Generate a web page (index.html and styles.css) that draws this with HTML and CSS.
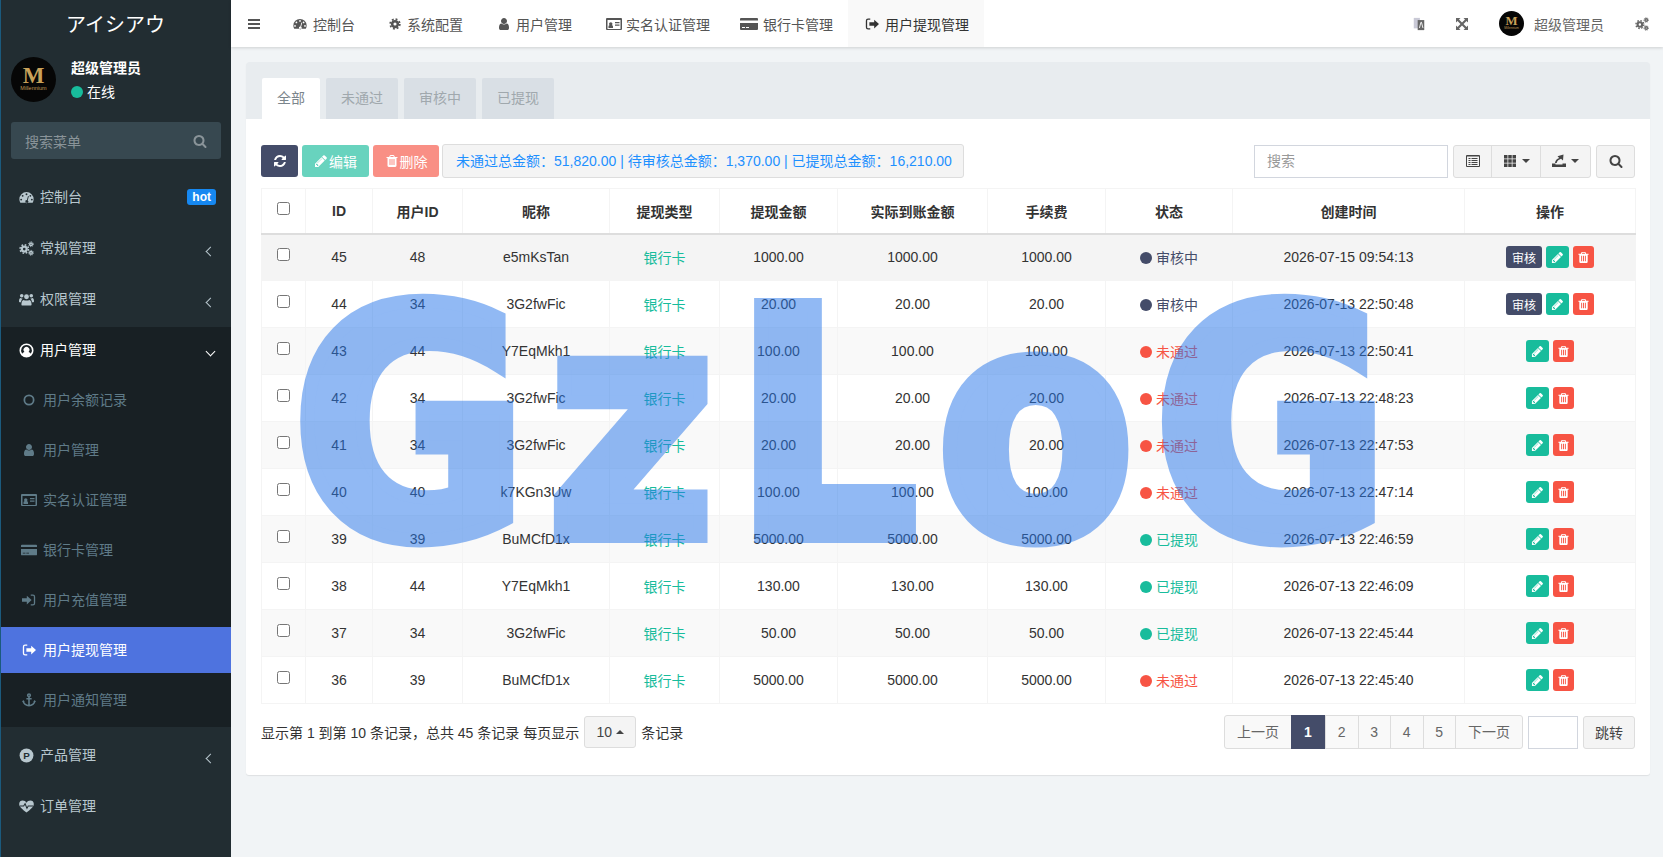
FILE: index.html
```html
<!DOCTYPE html>
<html lang="zh-CN">
<head>
    <meta charset="UTF-8">
    <title>用户提现管理</title>
    <link rel="stylesheet" href="styles.css">
</head>
<body>
    <svg class="sprite" xmlns="http://www.w3.org/2000/svg">
        <symbol id="i-logo" viewBox="0 0 45 45">
            <circle cx="22.5" cy="22.5" r="22.5" fill="#060606"/>
            <text x="22.5" y="26" text-anchor="middle" font-family="Liberation Serif" font-weight="700" font-size="23" fill="#c9a15a">M</text>
            <text x="22.5" y="33" text-anchor="middle" font-family="Liberation Sans" font-size="5.5" fill="#c09a55">Millennium</text>
        </symbol>
        <symbol id="i-dash" viewBox="0 0 16 16"><path fill-rule="evenodd" d="M8 2.2A7.6 7.6 0 0 0 .4 9.8c0 1.3.3 2.6 1 3.7h13.2c.7-1.1 1-2.4 1-3.7A7.6 7.6 0 0 0 8 2.2zM8 3.5a1 1 0 1 1 0 2 1 1 0 0 1 0-2zM3.9 5.2a1 1 0 1 1 0 2 1 1 0 0 1 0-2zM12.1 5.2a1 1 0 1 1 0 2 1 1 0 0 1 0-2zM2.3 9.2a1 1 0 1 1 0 2 1 1 0 0 1 0-2zM13.7 9.2a1 1 0 1 1 0 2 1 1 0 0 1 0-2zM9.6 6.4l.9.3-1.2 4.4a1.6 1.6 0 1 1-.9-.3z"/></symbol>
        <symbol id="i-cog" viewBox="0 0 16 16"><circle cx="8" cy="8" r="3.8" fill="none" stroke="currentColor" stroke-width="3.4"/><circle cx="8" cy="8" r="6.4" fill="none" stroke="currentColor" stroke-width="2.4" stroke-dasharray="2.5 2.53"/></symbol>
        <symbol id="i-cogs" viewBox="0 0 16 16">
            <circle cx="5.6" cy="8.6" r="2.6" fill="none" stroke="currentColor" stroke-width="2.4"/><circle cx="5.6" cy="8.6" r="4.5" fill="none" stroke="currentColor" stroke-width="1.6" stroke-dasharray="1.77 1.76"/>
            <circle cx="12.8" cy="3.4" r="1.4" fill="none" stroke="currentColor" stroke-width="1.6"/><circle cx="12.8" cy="3.4" r="2.6" fill="none" stroke="currentColor" stroke-width="1" stroke-dasharray="1.02 1.02"/>
            <circle cx="12.8" cy="12.6" r="1.4" fill="none" stroke="currentColor" stroke-width="1.6"/><circle cx="12.8" cy="12.6" r="2.6" fill="none" stroke="currentColor" stroke-width="1" stroke-dasharray="1.02 1.02"/>
        </symbol>
        <symbol id="i-users" viewBox="0 0 16 16"><circle cx="8" cy="5" r="2.6"/><circle cx="2.9" cy="3.9" r="1.9"/><circle cx="13.1" cy="3.9" r="1.9"/><path d="M3.6 14.4c-.7 0-1-.5-1-1.1 0-2.3.6-4.8 2.5-4.8 1 .8 4.8.8 5.8 0 1.9 0 2.5 2.5 2.5 4.8 0 .6-.4 1.1-1 1.1zM0 10c0-2 .5-3.6 1.9-3.6.5.5 1.3.7 2 .6-.6.5-1.4 1.5-1.8 3.8H.6c-.4 0-.6-.3-.6-.8zM16 10c0-2-.5-3.6-1.9-3.6-.5.5-1.3.7-2 .6.6.5 1.4 1.5 1.8 3.8h1.5c.4 0 .6-.3.6-.8z"/></symbol>
        <symbol id="i-ucircle" viewBox="0 0 16 16"><path fill-rule="evenodd" d="M8 .5a7.5 7.5 0 1 0 0 15 7.5 7.5 0 0 0 0-15zM8 2.2a5.8 5.8 0 0 1 4.6 9.3C12 10.2 10.8 9.6 10.2 9.5a3.1 3.1 0 1 0-4.4 0c-.6.1-1.8.7-2.4 2A5.8 5.8 0 0 1 8 2.2z"/></symbol>
        <symbol id="i-ring" viewBox="0 0 16 16"><circle cx="8" cy="8" r="5.3" fill="none" stroke="currentColor" stroke-width="2"/></symbol>
        <symbol id="i-user" viewBox="0 0 1792 1792"><path d="M1536 1399q0 109-62.5 187t-150.5 78h-854q-88 0-150.5-78t-62.5-187q0-85 8.5-160.5t31.5-152 58.5-131 94-89 134.5-34.5q131 128 313 128t313-128q76 0 134.5 34.5t94 89 58.5 131 31.5 152 8.5 160.5zm-256-887q0 159-112.5 271.5t-271.5 112.5-271.5-112.5-112.5-271.5 112.5-271.5 271.5-112.5 271.5 112.5 112.5 271.5z"/></symbol>
        <symbol id="i-idcard" viewBox="0 0 16 14"><path fill-rule="evenodd" d="M1 1h14a1 1 0 0 1 1 1v10a1 1 0 0 1-1 1H1a1 1 0 0 1-1-1V2a1 1 0 0 1 1-1zM1.5 3v9h13V3zM2.5 11V9.500c0-.8.6-1.200 1.200-1.200a1.700 1.700 0 1 1 2.100 0c.6 0 1.200.4 1.200 1.200V11zM9 5h4.500v1.200H9zM9 7.500h4.500v1.200H9z"/></symbol>
        <symbol id="i-card" viewBox="0 0 18 14"><path fill-rule="evenodd" d="M1 1h16a1 1 0 0 1 1 1v1.500H0V2a1 1 0 0 1 1-1zM0 6h18v6a1 1 0 0 1-1 1H1a1 1 0 0 1-1-1zM2 10v1h3v-1zM6 10v1h3v-1z"/></symbol>
        <symbol id="i-signin" viewBox="0 0 16 16"><path d="M0 6h5.500V3L11 8l-5.500 5v-3H0z"/><path d="M10 2.500h2.500c1 0 1.800.8 1.800 1.800v7.400c0 1-.8 1.800-1.800 1.800H10" fill="none" stroke="currentColor" stroke-width="1.500"/></symbol>
        <symbol id="i-signout" viewBox="0 0 16 16"><path d="M5 6h5.500V3L16 8l-5.500 5v-3H5z"/><path d="M6 2.500H3.500c-1 0-1.800.8-1.800 1.800v7.400c0 1 .8 1.800 1.800 1.800H6" fill="none" stroke="currentColor" stroke-width="1.500"/></symbol>
        <symbol id="i-anchor" viewBox="0 0 16 16"><g fill="none" stroke="currentColor" stroke-width="1.800"><circle cx="8" cy="2.600" r="1.500"/><path d="M8 4v10.500M5 6.500h6M1.500 9c0 3.500 3.500 5.500 6.500 5.500s6.500-2 6.500-5.500"/></g><path d="M0 10l1.500-2L3 10zM13 10l1.500-2 1.500 2z"/></symbol>
        <symbol id="i-ph" viewBox="0 0 16 16"><circle cx="8" cy="8" r="7.400"/><text x="8" y="11.600" text-anchor="middle" font-family="Liberation Sans" font-weight="700" font-size="10.500" fill="#222d32">P</text></symbol>
        <symbol id="i-heart" viewBox="0 0 16 16"><path d="M8 14.500C4 11 .2 8.500.2 5.200.2 3 1.900 1.700 3.900 1.700c1.800 0 3.200 1 4.100 2.200.9-1.200 2.300-2.200 4.100-2.200 2 0 3.700 1.300 3.700 3.500 0 3.300-3.800 5.800-7.800 9.300z"/><path d="M1 7.500h4L6.500 5l2 5 1.300-2.500H15" fill="none" stroke="#222d32" stroke-width="1.100"/></symbol>
        <symbol id="i-bars" viewBox="0 0 14 14"><path d="M1 2h12v2H1zM1 6h12v2H1zM1 10h12v2H1z"/></symbol>
        <symbol id="i-lang" viewBox="0 0 14 16"><path d="M1 1h7v12H1z" fill="#c9c9d6"/><path d="M5.500 3.500H13V15H5.500z" fill="#666"/><path d="M7.500 12.500l1.700-6.500h.6l1.700 6.500" fill="none" stroke="#fff" stroke-width="1"/></symbol>
        <symbol id="i-expand" viewBox="0 0 14 14"><path d="M1 1h4.500L4 2.500 7 5.500 10 2.500 8.500 1H13v4.500L11.500 4 8.500 7l3 3L13 8.500V13H8.500L10 11.500l-3-3-3 3L5.500 13H1V8.500L2.500 10l3-3-3-3L1 5.500z"/></symbol>
        <symbol id="i-refresh" viewBox="0 0 1792 1792"><path d="M1639 1056q0 5-1 7-64 268-268 434.5t-478 166.5q-146 0-282.5-55t-243.5-157l-129 129q-19 19-45 19t-45-19-19-45v-448q0-26 19-45t45-19h448q26 0 45 19t19 45-19 45l-137 137q71 66 161 102t187 36q134 0 250-65t186-179q11-17 53-117 8-23 30-23h192q13 0 22.5 9.5t9.5 22.5zm25-800v448q0 26-19 45t-45 19h-448q-26 0-45-19t-19-45 19-45l138-138q-148-137-349-137-134 0-250 65t-186 179q-11 17-53 117-8 23-30 23h-199q-13 0-22.5-9.5t-9.5-22.5v-7q65-268 270-434.5t480-166.5q146 0 284 55.5t245 156.5l130-129q19-19 45-19t45 19 19 45z"/></symbol>
        <symbol id="i-pencil" viewBox="0 0 1792 1792"><path d="M491 1536l91-91-235-235-91 91v107h128v128h107zm523-928q0-22-22-22-10 0-17 7l-542 542q-7 7-7 17 0 22 22 22 10 0 17-7l542-542q7-7 7-17zm-54-192l416 416-832 832h-416v-416zm683 96q0 53-37 90l-166 166-416-416 166-165q36-38 90-38 53 0 91 38l235 234q37 39 37 91z"/></symbol>
        <symbol id="i-trash" viewBox="0 0 1792 1792"><path d="M704 1376v-704q0-14-9-23t-23-9h-64q-14 0-23 9t-9 23v704q0 14 9 23t23 9h64q14 0 23-9t9-23zm256 0v-704q0-14-9-23t-23-9h-64q-14 0-23 9t-9 23v704q0 14 9 23t23 9h64q14 0 23-9t9-23zm256 0v-704q0-14-9-23t-23-9h-64q-14 0-23 9t-9 23v704q0 14 9 23t23 9h64q14 0 23-9t9-23zm-544-992h448l-48-117q-7-9-17-11h-317q-10 2-17 11zm928 32v64q0 14-9 23t-23 9h-96v948q0 83-47 143.5t-113 60.5h-832q-66 0-113-58.5t-47-141.5v-952h-96q-14 0-23-9t-9-23v-64q0-14 9-23t23-9h309l70-167q15-37 54-63t79-26h320q40 0 79 26t54 63l70 167h309q14 0 23 9t9 23z"/></symbol>
        <symbol id="i-search" viewBox="0 0 1792 1792"><path d="M1216 832q0-185-131.5-316.5t-316.5-131.5-316.5 131.5-131.5 316.5 131.5 316.5 316.5 131.5 316.5-131.5 131.5-316.5zm512 832q0 52-38 90t-90 38q-54 0-90-38l-343-342q-179 124-399 124-143 0-273.5-55.5t-225-150-150-225-55.5-273.5 55.5-273.5 150-225 225-150 273.5-55.5 273.5 55.5 225 150 150 225 55.5 273.5q0 220-124 399l343 343q37 37 37 90z"/></symbol>
        <symbol id="i-list" viewBox="0 0 14 14"><path fill-rule="evenodd" d="M1 1h12a1 1 0 0 1 1 1v10a1 1 0 0 1-1 1H1a1 1 0 0 1-1-1V2a1 1 0 0 1 1-1zM1 2.500V12h12V2.500zM2.500 4h2v1h-2zM5.500 4h6v1h-6zM2.500 6h2v1h-2zM5.500 6h6v1h-6zM2.500 8h2v1h-2zM5.500 8h6v1h-6zM2.500 10h2v1h-2zM5.500 10h6v1h-6z"/></symbol>
        <symbol id="i-th" viewBox="0 0 14 14"><path d="M1 1h3.500v3.500H1zM5.250 1h3.500v3.500h-3.500zM9.500 1H13v3.500H9.500zM1 5.250h3.500v3.500H1zM5.250 5.250h3.500v3.500h-3.500zM9.500 5.250H13v3.500H9.500zM1 9.500h3.500V13H1zM5.250 9.500h3.500V13h-3.500zM9.500 9.500H13V13H9.500z"/></symbol>
        <symbol id="i-export" viewBox="0 0 14 14"><path d="M0 9.500h3.500v1h7v-1H14V13H0zM3 9c.2-2.500 2-4.300 4.200-5L5.500 2.300 11.500.5 11 6.500 9 4.800C7 5.500 5 7 4.700 9z"/></symbol>
    </svg>

    <div class="layout">
        <aside class="sidebar">
            <div class="brand">アイシアウ</div>
            <div class="user-panel">
                <svg class="avatar"><use href="#i-logo"/></svg>
                <div class="user-info">
                    <div class="user-name">超级管理员</div>
                    <div class="user-state"><span class="dot dot-green"></span>在线</div>
                </div>
            </div>
            <div class="menu-search">
                <span>搜索菜单</span>
                <svg class="ico"><use href="#i-search"/></svg>
            </div>
            <ul class="menu">
                <li class="menu-item"><svg class="ico"><use href="#i-dash"/></svg><span>控制台</span><em class="badge">hot</em></li>
                <li class="menu-item"><svg class="ico"><use href="#i-cogs"/></svg><span>常规管理</span><i class="chev"></i></li>
                <li class="menu-item"><svg class="ico"><use href="#i-users"/></svg><span>权限管理</span><i class="chev"></i></li>
                <li class="menu-group">
                    <div class="menu-item open"><svg class="ico"><use href="#i-ucircle"/></svg><span>用户管理</span><i class="chev down"></i></div>
                    <ul class="submenu">
                        <li><svg class="ico"><use href="#i-ring"/></svg><span>用户余额记录</span></li>
                        <li><svg class="ico"><use href="#i-user"/></svg><span>用户管理</span></li>
                        <li><svg class="ico"><use href="#i-idcard"/></svg><span>实名认证管理</span></li>
                        <li><svg class="ico"><use href="#i-card"/></svg><span>银行卡管理</span></li>
                        <li><svg class="ico"><use href="#i-signin"/></svg><span>用户充值管理</span></li>
                        <li class="active"><svg class="ico"><use href="#i-signout"/></svg><span>用户提现管理</span></li>
                        <li><svg class="ico"><use href="#i-anchor"/></svg><span>用户通知管理</span></li>
                    </ul>
                </li>
                <li class="menu-item"><svg class="ico"><use href="#i-ph"/></svg><span>产品管理</span><i class="chev"></i></li>
                <li class="menu-item"><svg class="ico"><use href="#i-heart"/></svg><span>订单管理</span></li>
            </ul>
        </aside>

        <div class="main">
            <header class="navbar">
                <a class="nav-toggle"><svg class="ico"><use href="#i-bars"/></svg></a>
                <nav class="nav-tabs">
                    <a><svg class="ico"><use href="#i-dash"/></svg>控制台</a>
                    <a><svg class="ico ico-12"><use href="#i-cog"/></svg>系统配置</a>
                    <a class="tab-user"><svg class="ico"><use href="#i-user"/></svg>用户管理</a>
                    <a class="tab-id"><svg class="ico ico-16"><use href="#i-idcard"/></svg>实名认证管理</a>
                    <a class="tab-card"><svg class="ico ico-18"><use href="#i-card"/></svg>银行卡管理</a>
                    <a class="current"><svg class="ico"><use href="#i-signout"/></svg>用户提现管理</a>
                </nav>
                <div class="nav-right">
                    <svg class="ico"><use href="#i-lang"/></svg>
                    <svg class="ico"><use href="#i-expand"/></svg>
                    <span class="nav-user"><svg class="avatar-sm"><use href="#i-logo"/></svg>超级管理员</span>
                    <svg class="ico ico-16"><use href="#i-cogs"/></svg>
                </div>
            </header>

            <section class="content">
                <div class="panel">
                    <div class="panel-tabs">
                        <a class="tab active">全部</a>
                        <a class="tab">未通过</a>
                        <a class="tab">审核中</a>
                        <a class="tab">已提现</a>
                    </div>
                    <div class="panel-body">
                        <div class="toolbar">
                            <div class="tool-left">
                                <button class="btn btn-dark btn-refresh"><svg class="ico"><use href="#i-refresh"/></svg></button>
                                <button class="btn btn-green faded"><svg class="ico"><use href="#i-pencil"/></svg>编辑</button>
                                <button class="btn btn-red faded"><svg class="ico"><use href="#i-trash"/></svg>删除</button>
                                <div class="totals">未通过总金额：51,820.00 | 待审核总金额：1,370.00 | 已提现总金额：16,210.00</div>
                            </div>
                            <div class="tool-right">
                                <input class="search-input" type="text" placeholder="搜索">
                                <div class="btn-group">
                                    <button class="btn btn-light w-list"><svg class="ico"><use href="#i-list"/></svg></button>
                                    <button class="btn btn-light w-th"><svg class="ico"><use href="#i-th"/></svg><i class="caret"></i></button>
                                    <button class="btn btn-light w-exp"><svg class="ico"><use href="#i-export"/></svg><i class="caret"></i></button>
                                </div>
                                <button class="btn btn-light w-search"><svg class="ico"><use href="#i-search"/></svg></button>
                            </div>
                        </div>

                        <table class="grid">
                            <colgroup>
                                <col class="c-check"><col class="c-id"><col class="c-uid"><col class="c-nick"><col class="c-type"><col class="c-amount"><col class="c-real"><col class="c-fee"><col class="c-state"><col class="c-time"><col class="c-ops">
                            </colgroup>
                            <thead>
                                <tr><th><input type="checkbox"></th><th>ID</th><th>用户ID</th><th>昵称</th><th>提现类型</th><th>提现金额</th><th>实际到账金额</th><th>手续费</th><th>状态</th><th>创建时间</th><th>操作</th></tr>
                            </thead>
                            <tbody>
                                <tr class="hover"><td><input type="checkbox"></td><td>45</td><td>48</td><td>e5mKsTan</td><td class="bank">银行卡</td><td>1000.00</td><td>1000.00</td><td>1000.00</td><td class="st st-wait"><span class="dot"></span><span>审核中</span></td><td>2026-07-15 09:54:13</td><td class="ops"><a class="op op-audit">审核</a><a class="op op-edit"><svg class="ico"><use href="#i-pencil"/></svg></a><a class="op op-del"><svg class="ico"><use href="#i-trash"/></svg></a></td></tr>
                                <tr><td><input type="checkbox"></td><td>44</td><td>34</td><td>3G2fwFic</td><td class="bank">银行卡</td><td>20.00</td><td>20.00</td><td>20.00</td><td class="st st-wait"><span class="dot"></span><span>审核中</span></td><td>2026-07-13 22:50:48</td><td class="ops"><a class="op op-audit">审核</a><a class="op op-edit"><svg class="ico"><use href="#i-pencil"/></svg></a><a class="op op-del"><svg class="ico"><use href="#i-trash"/></svg></a></td></tr>
                                <tr><td><input type="checkbox"></td><td>43</td><td>44</td><td>Y7EqMkh1</td><td class="bank">银行卡</td><td>100.00</td><td>100.00</td><td>100.00</td><td class="st st-no"><span class="dot"></span><span>未通过</span></td><td>2026-07-13 22:50:41</td><td class="ops"><a class="op op-edit"><svg class="ico"><use href="#i-pencil"/></svg></a><a class="op op-del"><svg class="ico"><use href="#i-trash"/></svg></a></td></tr>
                                <tr><td><input type="checkbox"></td><td>42</td><td>34</td><td>3G2fwFic</td><td class="bank">银行卡</td><td>20.00</td><td>20.00</td><td>20.00</td><td class="st st-no"><span class="dot"></span><span>未通过</span></td><td>2026-07-13 22:48:23</td><td class="ops"><a class="op op-edit"><svg class="ico"><use href="#i-pencil"/></svg></a><a class="op op-del"><svg class="ico"><use href="#i-trash"/></svg></a></td></tr>
                                <tr><td><input type="checkbox"></td><td>41</td><td>34</td><td>3G2fwFic</td><td class="bank">银行卡</td><td>20.00</td><td>20.00</td><td>20.00</td><td class="st st-no"><span class="dot"></span><span>未通过</span></td><td>2026-07-13 22:47:53</td><td class="ops"><a class="op op-edit"><svg class="ico"><use href="#i-pencil"/></svg></a><a class="op op-del"><svg class="ico"><use href="#i-trash"/></svg></a></td></tr>
                                <tr><td><input type="checkbox"></td><td>40</td><td>40</td><td>k7KGn3Uw</td><td class="bank">银行卡</td><td>100.00</td><td>100.00</td><td>100.00</td><td class="st st-no"><span class="dot"></span><span>未通过</span></td><td>2026-07-13 22:47:14</td><td class="ops"><a class="op op-edit"><svg class="ico"><use href="#i-pencil"/></svg></a><a class="op op-del"><svg class="ico"><use href="#i-trash"/></svg></a></td></tr>
                                <tr><td><input type="checkbox"></td><td>39</td><td>39</td><td>BuMCfD1x</td><td class="bank">银行卡</td><td>5000.00</td><td>5000.00</td><td>5000.00</td><td class="st st-ok"><span class="dot"></span><span>已提现</span></td><td>2026-07-13 22:46:59</td><td class="ops"><a class="op op-edit"><svg class="ico"><use href="#i-pencil"/></svg></a><a class="op op-del"><svg class="ico"><use href="#i-trash"/></svg></a></td></tr>
                                <tr><td><input type="checkbox"></td><td>38</td><td>44</td><td>Y7EqMkh1</td><td class="bank">银行卡</td><td>130.00</td><td>130.00</td><td>130.00</td><td class="st st-ok"><span class="dot"></span><span>已提现</span></td><td>2026-07-13 22:46:09</td><td class="ops"><a class="op op-edit"><svg class="ico"><use href="#i-pencil"/></svg></a><a class="op op-del"><svg class="ico"><use href="#i-trash"/></svg></a></td></tr>
                                <tr><td><input type="checkbox"></td><td>37</td><td>34</td><td>3G2fwFic</td><td class="bank">银行卡</td><td>50.00</td><td>50.00</td><td>50.00</td><td class="st st-ok"><span class="dot"></span><span>已提现</span></td><td>2026-07-13 22:45:44</td><td class="ops"><a class="op op-edit"><svg class="ico"><use href="#i-pencil"/></svg></a><a class="op op-del"><svg class="ico"><use href="#i-trash"/></svg></a></td></tr>
                                <tr><td><input type="checkbox"></td><td>36</td><td>39</td><td>BuMCfD1x</td><td class="bank">银行卡</td><td>5000.00</td><td>5000.00</td><td>5000.00</td><td class="st st-no"><span class="dot"></span><span>未通过</span></td><td>2026-07-13 22:45:40</td><td class="ops"><a class="op op-edit"><svg class="ico"><use href="#i-pencil"/></svg></a><a class="op op-del"><svg class="ico"><use href="#i-trash"/></svg></a></td></tr>
                            </tbody>
                        </table>

                        <div class="grid-footer">
                            <div class="page-info">
                                <span>显示第 1 到第 10 条记录，总共 45 条记录 每页显示</span>
                                <button class="btn btn-light page-size">10<i class="caret up"></i></button>
                                <span>条记录</span>
                            </div>
                            <div class="pager-wrap">
                                <ul class="pager">
                                    <li class="p-text">上一页</li>
                                    <li class="current">1</li>
                                    <li>2</li>
                                    <li>3</li>
                                    <li>4</li>
                                    <li>5</li>
                                    <li class="p-text">下一页</li>
                                </ul>
                                <input class="jump-input" type="text">
                                <button class="btn btn-light jump">跳转</button>
                            </div>
                        </div>
                    </div>
                </div>
            </section>
        </div>
    </div>

    <div class="watermark">GzLoG</div>
</body>
</html>
```

FILE: styles.css
```css
* {
    box-sizing: border-box;
}
html, body {
    margin: 0;
    padding: 0;
    height: 100%;
    overflow: hidden;
}
body {
    font-family: "Liberation Sans", "Noto Sans CJK SC", sans-serif;
    font-size: 14px;
    color: #333;
    background: #f1f4f6;
}
ul {
    list-style: none;
    margin: 0;
    padding: 0;
}
.sprite {
    display: none;
}
.ico {
    width: 14px;
    height: 14px;
    fill: currentColor;
    flex: none;
}
.ico-12 {
    width: 12px;
}
.ico-16 {
    width: 16px;
}
.ico-18 {
    width: 18px;
}
.layout {
    display: flex;
    height: 857px;
}

/* sidebar */
.sidebar {
    width: 231px;
    flex: none;
    background: #222d32;
    border-left: 1px solid #1b5a7d;
    color: #b8c7ce;
}
.brand {
    height: 47px;
    margin-left: -1px;
    display: flex;
    align-items: center;
    justify-content: center;
    font-size: 20px;
    color: #fff;
}
.user-panel {
    display: flex;
    align-items: center;
    gap: 15px;
    padding: 0 10px;
    height: 65px;
}
.avatar {
    width: 45px;
    height: 45px;
}
.user-name {
    font-weight: 700;
    color: #fff;
    line-height: 20px;
    margin-bottom: 4px;
}
.user-state {
    display: flex;
    align-items: center;
    gap: 4px;
    color: #fff;
    line-height: 20px;
}
.dot {
    display: inline-block;
    width: 12px;
    height: 12px;
    border-radius: 50%;
    background: currentColor;
}
.dot-green {
    background: #18bc9c;
}
.menu-search {
    margin: 10px 10px 15px;
    height: 37px;
    padding: 0 14px;
    display: flex;
    align-items: center;
    justify-content: space-between;
    background: #374850;
    border-radius: 3px;
    color: #8a9499;
}
.menu-item {
    display: flex;
    align-items: center;
    height: 46px;
    margin-bottom: 5px;
    padding: 0 15px 0 18px;
    gap: 6px;
}
.menu-item .ico {
    width: 15px;
    height: 15px;
}
.menu-item span {
    flex: 1;
    position: relative;
    top: -1px;
}
.badge {
    font-style: normal;
    font-weight: 700;
    font-size: 12px;
    line-height: 16px;
    color: #fff;
    background: #1688f1;
    padding: 0 5px;
    border-radius: 3px;
}
.chev {
    width: 7px;
    height: 7px;
    margin: 6px 2px 0 0;
    border-left: 1.5px solid #b8c7ce;
    border-bottom: 1.5px solid #b8c7ce;
    transform: rotate(45deg);
}
.chev.down {
    transform: rotate(-45deg);
    border-color: #fff;
    margin-top: 2px;
}
.menu-group {
    display: flow-root;
    background: #182024;
    margin-bottom: 5px;
}
.menu-group > .menu-item {
    margin-bottom: 4px;
}
.menu-item.open {
    color: #fff;
}
.submenu li {
    display: flex;
    align-items: center;
    height: 46px;
    margin-bottom: 4px;
    color: #5f7b88;
    gap: 6px;
    padding-left: 20px;
}
.submenu span {
    position: relative;
    top: -1px;
}
.submenu .ico {
    width: 16px;
    height: 14px;
}
.submenu .active {
    background: #4e73df;
    color: #fff;
}

/* top bar */
.main {
    flex: 1;
    min-width: 0;
    display: flex;
    flex-direction: column;
}
.navbar {
    height: 47px;
    flex: none;
    display: flex;
    align-items: center;
    background: #fff;
    box-shadow: 0 1px 3px rgba(0, 0, 0, 0.15);
    color: #555;
    position: relative;
}
.nav-toggle {
    width: 45px;
    display: flex;
    justify-content: center;
}
.nav-tabs {
    display: flex;
    height: 47px;
    flex: 1;
}
.nav-tabs a {
    display: flex;
    align-items: center;
    gap: 6px;
    padding: 0 17px;
}
.nav-tabs .tab-user {
    gap: 5px;
}
.nav-tabs .tab-id {
    gap: 4px;
}
.nav-tabs .tab-card {
    gap: 5px;
    margin-left: -4px;
}
.nav-tabs .current {
    background: #f9f9f9;
    color: #333;
    margin-left: -2px;
    padding-right: 15px;
}
.nav-right {
    display: flex;
    align-items: center;
    padding-right: 13px;
    color: #666;
}
.nav-right .ico:first-child {
    margin-right: 29px;
}
.nav-user {
    display: flex;
    align-items: center;
    gap: 10px;
    margin: 0 30px;
}
.avatar-sm {
    width: 25px;
    height: 25px;
}

/* panel */
.content {
    padding: 15px 13px 0 15px;
}
.panel {
    background: #fff;
    border-radius: 3px;
    box-shadow: 0 1px 1px rgba(0, 0, 0, 0.08);
}
.panel-tabs {
    display: flex;
    gap: 6px;
    height: 57px;
    padding: 16px 0 0 16px;
    background: #e8ecef;
    border-radius: 3px 3px 0 0;
}
.tab {
    padding: 0 15px;
    line-height: 41px;
    background: #d9dfe5;
    color: #a0a8ad;
    border-radius: 2px 2px 0 0;
}
.tab.active {
    background: #fff;
    color: #7b858c;
}
.panel-body {
    padding: 25px 15px 26px;
}

/* toolbar */
.toolbar {
    display: flex;
    justify-content: space-between;
    height: 34px;
    margin-bottom: 10px;
}
.tool-left, .tool-right {
    display: flex;
    align-items: center;
}
.tool-left {
    gap: 4px;
}
.btn {
    display: inline-flex;
    align-items: center;
    justify-content: center;
    gap: 1px;
    height: 32px;
    padding: 0;
    border: 1px solid transparent;
    border-radius: 3px;
    font: inherit;
    color: #fff;
}
.btn-dark {
    background: #444c69;
}
.btn-green {
    background: #18bc9c;
    width: 67px;
}
.btn-red {
    background: #f75444;
    width: 66px;
}
.btn-refresh {
    width: 37px;
}
.faded {
    opacity: 0.65;
}
.btn-light {
    background: #f4f4f4;
    border-color: #ddd;
    color: #444;
}
.totals {
    height: 34px;
    line-height: 32px;
    margin-left: -1px;
    padding: 0 13px;
    width: 522px;
    white-space: nowrap;
    background: #f4f4f4;
    border: 1px solid #ddd;
    border-radius: 3px;
    color: #1e90ff;
}
.search-input {
    width: 194px;
    height: 33px;
    padding: 0 12px;
    border: 1px solid #d2d6de;
    font: inherit;
    outline: none;
}
.search-input::placeholder {
    color: #999;
}
.tool-right .btn {
    height: 33px;
}
.btn-group {
    display: flex;
    margin: 0 5px;
}
.btn-group .btn {
    border-radius: 0;
    margin-left: -1px;
    gap: 5px;
}
.btn-group .btn:first-child {
    border-radius: 3px 0 0 3px;
    margin-left: 0;
}
.btn-group .btn:last-child {
    border-radius: 0 3px 3px 0;
}
.w-list {
    width: 39px;
}
.w-th {
    width: 50px;
}
.w-exp {
    width: 51px;
}
.w-search {
    width: 39px;
}
.caret {
    width: 0;
    height: 0;
    border-left: 4px solid transparent;
    border-right: 4px solid transparent;
    border-top: 4px solid #444;
}
.caret.up {
    border-top: 0;
    border-bottom: 4px solid #444;
}

/* table */
.grid {
    width: 1374px;
    table-layout: fixed;
    border-collapse: collapse;
    border: 1px solid #f4f4f4;
    text-align: center;
}
.c-check {
    width: 44px;
}
.c-id {
    width: 67px;
}
.c-uid {
    width: 90px;
}
.c-nick {
    width: 147px;
}
.c-type {
    width: 110px;
}
.c-amount, .c-fee {
    width: 118px;
}
.c-real {
    width: 150px;
}
.c-state {
    width: 127px;
}
.c-time {
    width: 232px;
}
.c-ops {
    width: 171px;
}
.grid th {
    height: 45px;
    font-weight: 700;
    border: 1px solid #f4f4f4;
    border-bottom: 2px solid #ddd;
    color: #333;
}
.grid td {
    height: 47px;
    padding: 0;
    border: 1px solid #f4f4f4;
}
.grid input {
    margin: 0;
    width: 13px;
    height: 13px;
    position: relative;
    top: -1px;
}
.grid tbody tr:nth-child(odd) {
    background: #f9f9f9;
}
.grid tbody tr.hover {
    background: #f4f4f4;
}
.bank {
    color: #18bc9c;
}
.st .dot {
    width: 12px;
    height: 12px;
    margin-right: 4px;
    vertical-align: -1px;
}
.st-wait {
    color: #444c69;
}
.st-no {
    color: #f75444;
}
.st-ok {
    color: #18bc9c;
}
.ops {
    font-size: 0;
}
.op {
    display: inline-flex;
    align-items: center;
    justify-content: center;
    vertical-align: middle;
    width: 21px;
    height: 22px;
    margin-left: 4px;
    border-radius: 3px;
    color: #fff;
    font-size: 12px;
}
.op:first-child {
    margin-left: 0;
}
.op .ico {
    width: 13px;
    height: 13px;
}
.op-audit {
    width: 36px;
    background: #444c69;
}
.op-edit {
    width: 23px;
    background: #18bc9c;
}
.op-del {
    background: #f75444;
}

/* footer */
.grid-footer {
    display: flex;
    justify-content: space-between;
    margin-top: 11px;
    height: 34px;
}
.page-info {
    display: flex;
    align-items: center;
    gap: 5px;
}
.page-size {
    width: 52px;
    height: 32px;
    gap: 4px;
}
.pager-wrap {
    display: flex;
    align-items: center;
    gap: 5px;
}
.pager {
    display: flex;
    height: 34px;
    line-height: 32px;
    border: 1px solid #ddd;
    border-radius: 3px;
    background: #f9f9f9;
    color: #666;
    text-align: center;
}
.pager li {
    width: 32.5px;
    border-left: 1px solid #ddd;
}
.pager li:first-child {
    border-left: 0;
}
.pager .p-text {
    width: 67px;
}
.pager .p-text:first-child {
    width: 66px;
}
.pager .current {
    width: 34px;
    background: #444c69;
    color: #fff;
    font-weight: 700;
    border-left: 0;
    margin: -1px 0;
    line-height: 34px;
    height: 34px;
}
.jump-input {
    width: 50px;
    height: 33px;
    border: 1px solid #d2d6de;
}
.jump {
    width: 52px;
    height: 33px;
}

/* page-wide text stamp lying over everything; the stroke thickens the font to the stamp's weight */
.watermark {
    position: absolute;
    left: 293px;
    top: 268px;
    font-family: "DejaVu Sans", sans-serif;
    font-stretch: condensed;
    font-weight: 700;
    font-size: 317px;
    line-height: 317px;
    letter-spacing: 21px;
    color: #2575ea;
    -webkit-text-stroke: 14px #2575ea;
    opacity: 0.5;
    white-space: nowrap;
    pointer-events: none;
}
```
